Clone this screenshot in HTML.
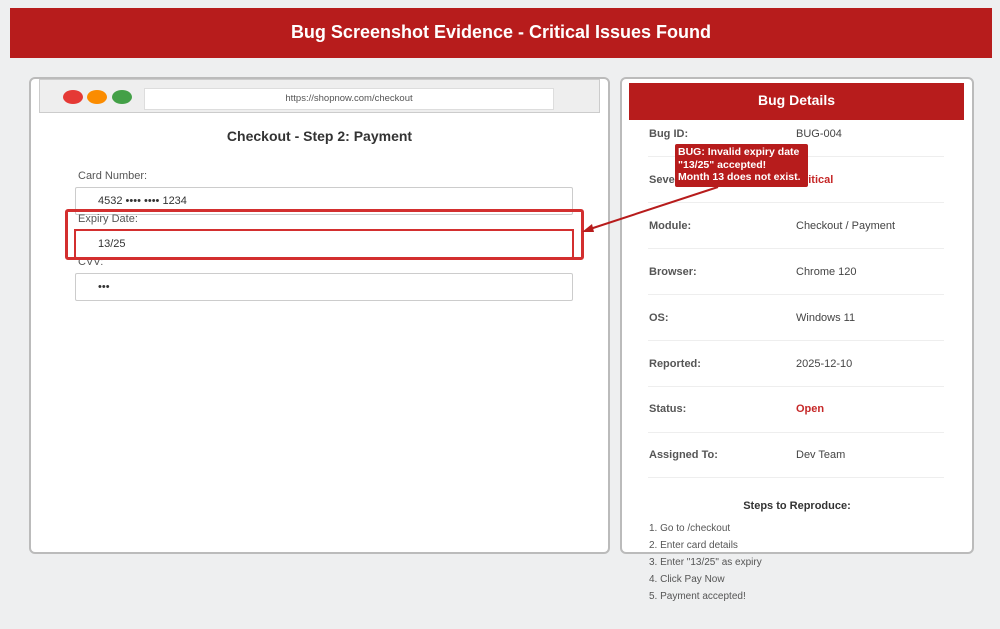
<!DOCTYPE html><html><head><style>
*{margin:0;padding:0;box-sizing:border-box}
body{width:1000px;height:629px;background:#eeeff0;font-family:"Liberation Sans",sans-serif;position:relative;overflow:hidden;color:#333}
.a{position:absolute}
.hdr{left:10px;top:8px;width:982px;height:50px;background:#b71c1c;color:#fff;font-weight:bold;font-size:18px;text-align:center;line-height:48px}
.panel{background:#fff;border:2px solid #bbb;border-radius:6px}
.in{left:75px;width:498px;height:28px;border:1px solid #ccc;border-radius:2px;background:#fff;font-size:11px;padding-left:22px;line-height:26px}
.lb{left:78px;font-size:11px;color:#555}
.rl{left:649px;font-size:11px;font-weight:bold;color:#555}
.rv{left:796px;font-size:11px;color:#444}
.sep{left:648px;width:296px;height:1px;background:#eee}
.st{left:649px;font-size:10px;color:#555}
</style></head><body>
<div class="a hdr">Bug Screenshot Evidence - Critical Issues Found</div>
<div class="a panel" style="left:29px;top:77px;width:581px;height:477px"></div>
<div class="a" style="left:39px;top:79px;width:561px;height:34px;background:#eee;border:1px solid #ccc"></div>
<div class="a" style="left:63px;top:90px;width:20px;height:14px;border-radius:50%;background:#e53935"></div>
<div class="a" style="left:87px;top:90px;width:20px;height:14px;border-radius:50%;background:#fb8c00"></div>
<div class="a" style="left:112px;top:90px;width:20px;height:14px;border-radius:50%;background:#43a047"></div>
<div class="a" style="left:144px;top:88px;width:410px;height:22px;background:#fff;border:1px solid #ddd;font-size:9.5px;text-align:center;line-height:20px;color:#555">https://shopnow.com/checkout</div>
<div class="a" style="left:29px;width:581px;top:128px;text-align:center;font-weight:bold;font-size:14px;color:#333">Checkout - Step 2: Payment</div>
<div class="a lb" style="top:170px">Card Number:</div>
<div class="a in" style="top:187px">4532 •••• •••• 1234</div>
<div class="a lb" style="top:213px">Expiry Date:</div>
<div class="a in" style="top:230px">13/25</div>
<div class="a lb" style="top:256px">CVV:</div>
<div class="a in" style="top:273px">•••</div>
<div class="a" style="left:65px;top:209px;width:519px;height:51px;border:3px solid #d32f2f;border-radius:3px"></div>
<div class="a" style="left:74px;top:229px;width:500px;height:30px;border:2px solid #d32f2f"></div>
<div class="a panel" style="left:620px;top:77px;width:354px;height:477px"></div>
<div class="a" style="left:629px;top:83px;width:335px;height:37px;background:#b71c1c;color:#fff;font-weight:bold;font-size:14px;text-align:center;line-height:35px">Bug Details</div>
<div class="a rl" style="top:128px">Bug ID:</div><div class="a rv" style="top:128px">BUG-004</div><div class="a sep" style="top:156px"></div>
<div class="a rl" style="top:174px">Severity:</div><div class="a rv" style="top:174px;color:#c62828;font-weight:bold">Critical</div><div class="a sep" style="top:202px"></div>
<div class="a rl" style="top:220px">Module:</div><div class="a rv" style="top:220px">Checkout / Payment</div><div class="a sep" style="top:248px"></div>
<div class="a rl" style="top:266px">Browser:</div><div class="a rv" style="top:266px">Chrome 120</div><div class="a sep" style="top:294px"></div>
<div class="a rl" style="top:312px">OS:</div><div class="a rv" style="top:312px">Windows 11</div><div class="a sep" style="top:340px"></div>
<div class="a rl" style="top:358px">Reported:</div><div class="a rv" style="top:358px">2025-12-10</div><div class="a sep" style="top:386px"></div>
<div class="a rl" style="top:403px">Status:</div><div class="a rv" style="top:403px;color:#c62828;font-weight:bold">Open</div><div class="a sep" style="top:432px"></div>
<div class="a rl" style="top:449px">Assigned To:</div><div class="a rv" style="top:449px">Dev Team</div><div class="a sep" style="top:477px"></div>
<div class="a" style="left:620px;width:354px;top:500px;text-align:center;font-weight:bold;font-size:11px;color:#333">Steps to Reproduce:</div>
<div class="a st" style="top:523px">1. Go to /checkout</div>
<div class="a st" style="top:540px">2. Enter card details</div>
<div class="a st" style="top:557px">3. Enter "13/25" as expiry</div>
<div class="a st" style="top:574px">4. Click Pay Now</div>
<div class="a st" style="top:591px">5. Payment accepted!</div>
<svg class="a" style="left:0;top:0" width="1000" height="629"><line x1="718" y1="187" x2="590" y2="229" stroke="#b71c1c" stroke-width="2"/><polygon points="582,232 592,224 594,232" fill="#b71c1c"/></svg>
<div class="a" style="left:675px;top:144px;width:133px;height:43px;background:#b71c1c;border-radius:2px;color:#fff;font-weight:bold;font-size:10.5px;line-height:12.5px;padding:2px 3px;white-space:nowrap">BUG: Invalid expiry date<br>"13/25" accepted!<br>Month 13 does not exist.</div>
</body></html>
